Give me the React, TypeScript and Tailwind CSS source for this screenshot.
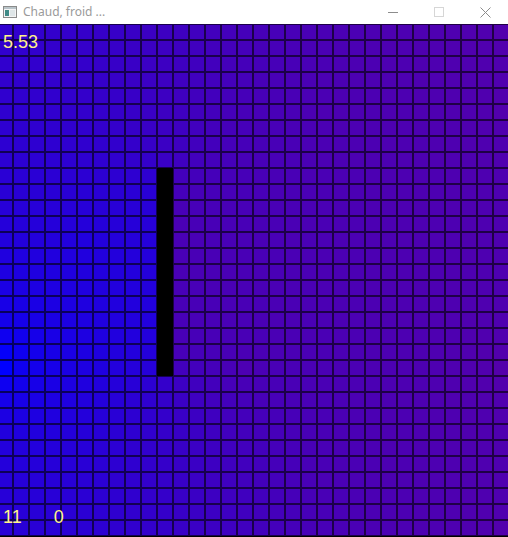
import { useMemo } from "react";

const COLS = 32;
const ROWS = 32;

const isWall = (c: number, r: number) => c === 10 && r >= 9 && r <= 21;

// measured temperatures, the rest is relaxed between them
const ANCHORS: [number, number, number][] = [
  [0, 21, 0], [0, 20, 0.02], [1, 21, 0.06], [3, 21, 0.09], [6, 21, 0.12], [9, 21, 0.15],
  [9, 15, 0.14], [9, 10, 0.16], [5, 13, 0.13], [0, 10, 0.16], [0, 0, 0.19], [0, 25, 0.13],
  [0, 31, 0.16], [6, 0, 0.21], [13, 0, 0.26], [5, 5, 0.2], [10, 5, 0.24], [15, 5, 0.28],
  [20, 5, 0.3], [31, 5, 0.32], [31, 0, 0.32], [11, 12, 0.29], [11, 20, 0.28], [15, 21, 0.3],
  [31, 21, 0.33], [6, 28, 0.17], [13, 28, 0.24], [20, 28, 0.29], [31, 31, 0.32],
];

function relax(iters: number) {
  const t = new Array(COLS * ROWS).fill(0.25);
  const fixed = new Set<number>();
  for (const [c, r, v] of ANCHORS) {
    t[r * COLS + c] = v;
    fixed.add(r * COLS + c);
  }
  for (let k = 0; k < iters; k++) {
    for (let r = 0; r < ROWS; r++) {
      for (let c = 0; c < COLS; c++) {
        const i = r * COLS + c;
        if (fixed.has(i) || isWall(c, r)) continue;
        let sum = 0;
        let n = 0;
        for (const [dc, dr] of [[1, 0], [-1, 0], [0, 1], [0, -1]]) {
          const nc = c + dc;
          const nr = r + dr;
          if (nc < 0 || nr < 0 || nc >= COLS || nr >= ROWS || isWall(nc, nr)) continue;
          sum += t[nr * COLS + nc];
          n++;
        }
        t[i] = sum / n;
      }
    }
  }
  return t;
}

function AppIcon() {
  return (
    <svg width="16" height="16" viewBox="0 0 16 16">
      <rect x="1.5" y="2.5" width="13" height="11" fill="#f4f4f4" stroke="#8a8a8a" />
      <rect x="2" y="3" width="12" height="2" fill="#b9c4c8" />
      <rect x="3" y="6" width="4" height="6" fill="#3f8a86" />
      <rect x="8" y="6" width="5" height="6" fill="#dfe6e8" />
    </svg>
  );
}

function TitleBar() {
  return (
    <div className="h-[24px] bg-white flex items-center select-none">
      <div className="pl-[2px] pr-[5px] flex items-center">
        <AppIcon />
      </div>
      <span className="text-[12px] text-[#9a9a9a] font-['Noto_Sans',sans-serif] leading-none flex-1">
        Chaud, froid ...
      </span>
      <div className="flex items-center h-full">
        <div className="w-[46px] h-full flex items-center justify-center">
          <div className="w-[10px] h-px bg-[#8c8c8c]" />
        </div>
        <div className="w-[46px] h-full flex items-center justify-center">
          <div className="w-[10px] h-[10px] border border-[#d6d6d6]" />
        </div>
        <div className="w-[46px] h-full flex items-center justify-center">
          <svg width="11" height="11" viewBox="0 0 11 11">
            <path d="M0.5 0.5 L10.5 10.5 M10.5 0.5 L0.5 10.5" stroke="#8c8c8c" strokeWidth="1" />
          </svg>
        </div>
      </div>
    </div>
  );
}

export default function App() {
  const field = useMemo(() => relax(1500), []);

  return (
    <div className="w-[508px] h-[537px] overflow-hidden bg-white">
      <TitleBar />
      <div className="relative h-[513px] overflow-hidden bg-black">
        <div className="grid grid-cols-[repeat(32,16px)] ml-[-3px] w-[512px]">
          {field.map((v, i) => {
            const c = i % COLS;
            const r = Math.floor(i / COLS);
            const bg = isWall(c, r)
              ? "rgb(0,0,0)"
              : `rgb(${Math.round(255 * v)},0,${Math.round(255 * (1 - v))})`;
            return (
              <div
                key={i}
                className="w-[16px] h-[16px] border border-black/60"
                style={{ backgroundColor: bg }}
              />
            );
          })}
        </div>
        <div className="absolute left-[3px] top-[9px] text-[18px] leading-none text-[#fff38a] font-['Liberation_Sans',sans-serif]">
          5.53
        </div>
        <div className="absolute left-[3px] top-[484px] flex gap-[32px] text-[18px] leading-none text-[#fff38a] font-['Liberation_Sans',sans-serif]">
          <span>11</span>
          <span>0</span>
        </div>
      </div>
    </div>
  );
}
